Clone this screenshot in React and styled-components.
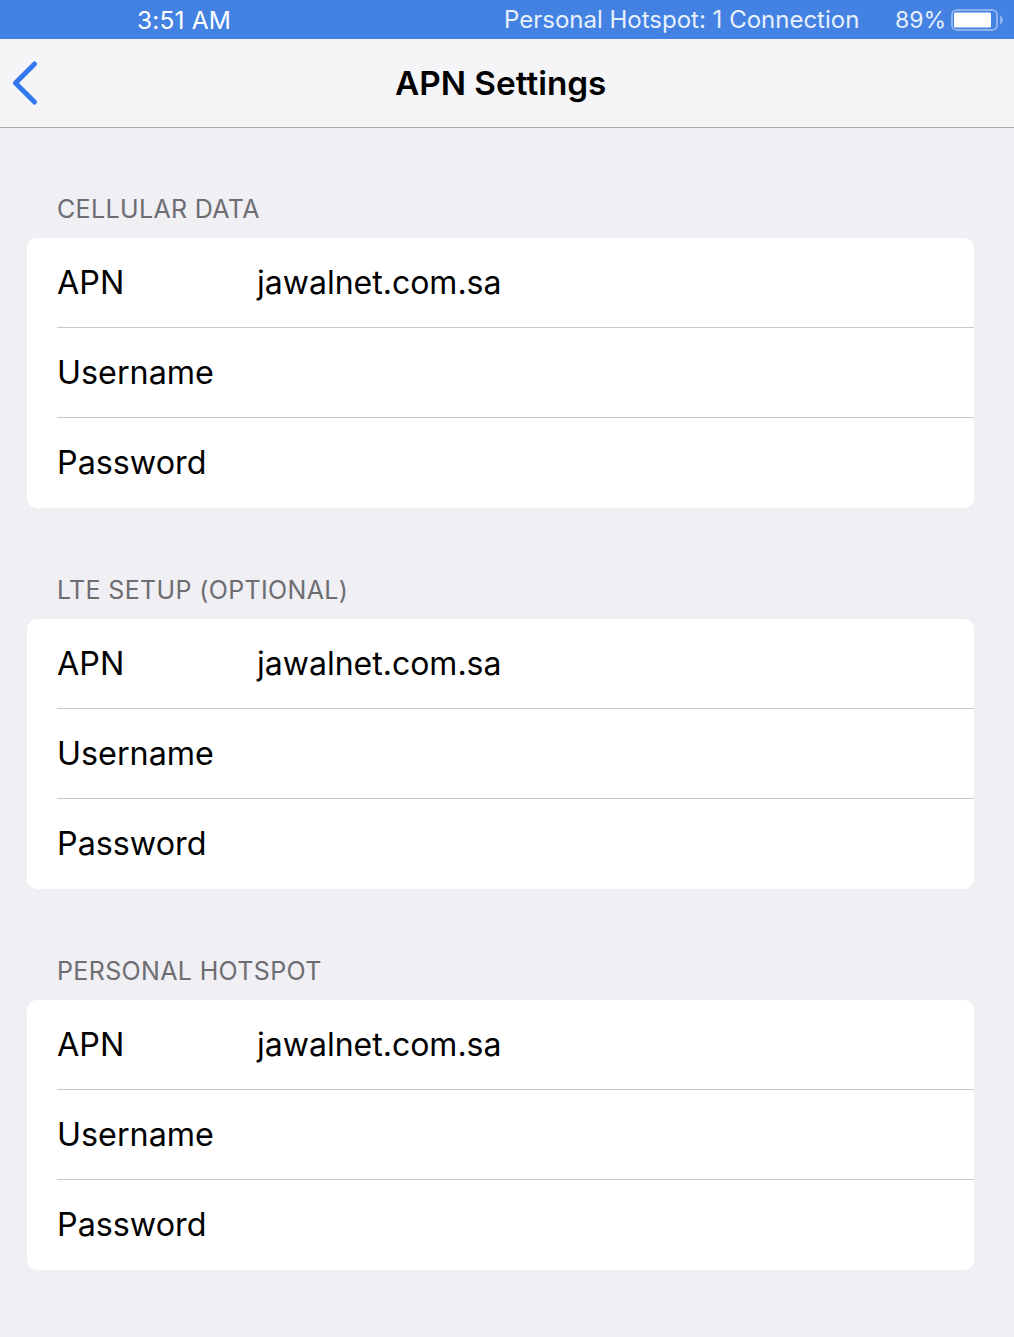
import styled, { createGlobalStyle } from "styled-components";

const sections = [
  { title: "CELLULAR DATA" },
  { title: "LTE SETUP (OPTIONAL)" },
  { title: "PERSONAL HOTSPOT" },
];

const App = () => {
  return (
    <Page>
      <GlobalStyle />
      <StatusBar>
        <Time>3:51 AM</Time>
        <Hotspot>Personal Hotspot: 1 Connection</Hotspot>
        <Percent>89%</Percent>
        <Battery width="53" height="24" viewBox="0 0 53 24">
          <rect x="1" y="2" width="45" height="20" rx="5" fill="none" stroke="#8db3ef" strokeWidth="2" />
          <rect x="3" y="4.5" width="37" height="15" rx="1.500" fill="#fff" />
          <path d="M49 7.500c2 .5 3 2.500 3 4.500s-1 4-3 4.500z" fill="#8db3ef" />
        </Battery>
      </StatusBar>
      <NavBar>
        <BackIcon width="30" height="46" viewBox="0 0 30 46">
          <path d="M24.500 4 L5.500 23 L24.500 42" fill="none" stroke="#3478f0" strokeWidth="5" strokeLinecap="round" strokeLinejoin="round" />
        </BackIcon>
        <Title>APN Settings</Title>
      </NavBar>
      <Content>
        {sections.map((section) => (
          <Section key={section.title}>
            <SectionTitle>{section.title}</SectionTitle>
            <Card>
              <Row>
                <Label>APN</Label>
                <Value>jawalnet.com.sa</Value>
              </Row>
              <Row>
                <Label>Username</Label>
              </Row>
              <Row $last>
                <Label>Password</Label>
              </Row>
            </Card>
          </Section>
        ))}
      </Content>
    </Page>
  );
};
export default App;

const GlobalStyle = createGlobalStyle`
  html, body {
    margin: 0;
    padding: 0;
    background: #efeff4;
  }
  body {
    font-family: Inter, "Liberation Sans", sans-serif;
  }
`;

const Page = styled.div`
  width: 1014px;
  height: 1337px;
  overflow: hidden;
  background: #efeff4;
`;

const StatusBar = styled.div`
  height: 39px;
  background: #4381e2;
  color: #fff;
  display: flex;
  align-items: center;
  font-size: 23px;
`;

const Time = styled.span`
  margin-left: 137px;
  width: 367px;
  font-size: 24.500px;
  letter-spacing: 0.15px;
`;

const Hotspot = styled.span`
  width: 391px;
  font-size: 24px;
  white-space: nowrap;
  color: #e8f0fc;
`;

const Percent = styled.span`
  width: 56px;
  color: #e8f0fc;
`;

const Battery = styled.svg`
  flex: none;
`;

const NavBar = styled.div`
  height: 88px;
  background: #f5f5f8;
  border-bottom: 1px solid #ababaf;
  display: flex;
  align-items: center;
  position: relative;
`;

const BackIcon = styled.svg`
  position: absolute;
  left: 10px;
  top: 21px;
`;

const Title = styled.h1`
  margin: 0 0 0 395px;
  font-size: 33.300px;
  font-weight: 600;
  color: #000;
`;

const Content = styled.div`
  padding: 0 40px 0 27px;
  display: flex;
  flex-direction: column;
`;

const Section = styled.section`
  padding-top: 63px;
  & + & {
    padding-top: 64px;
  }
`;

const SectionTitle = styled.h2`
  margin: 0 0 0 30px;
  height: 47px;
  line-height: 37px;
  font-size: 25px;
  font-weight: 400;
  letter-spacing: 0.35px;
  color: #6d6d72;
`;

const Card = styled.div`
  background: #fff;
  border-radius: 10px;
  overflow: hidden;
`;

const Row = styled.div`
  height: 90px;
  margin-left: 30px;
  padding-bottom: 2px;
  box-sizing: border-box;
  display: flex;
  align-items: center;
  box-shadow: ${(props) => (props.$last ? "none" : "inset 0 -1px 0 #c8c7cc")};
`;

const Label = styled.span`
  width: 200px;
  font-size: 32.300px;
  color: #000;
`;

const Value = styled.span`
  font-size: 32px;
  color: #000;
`;
